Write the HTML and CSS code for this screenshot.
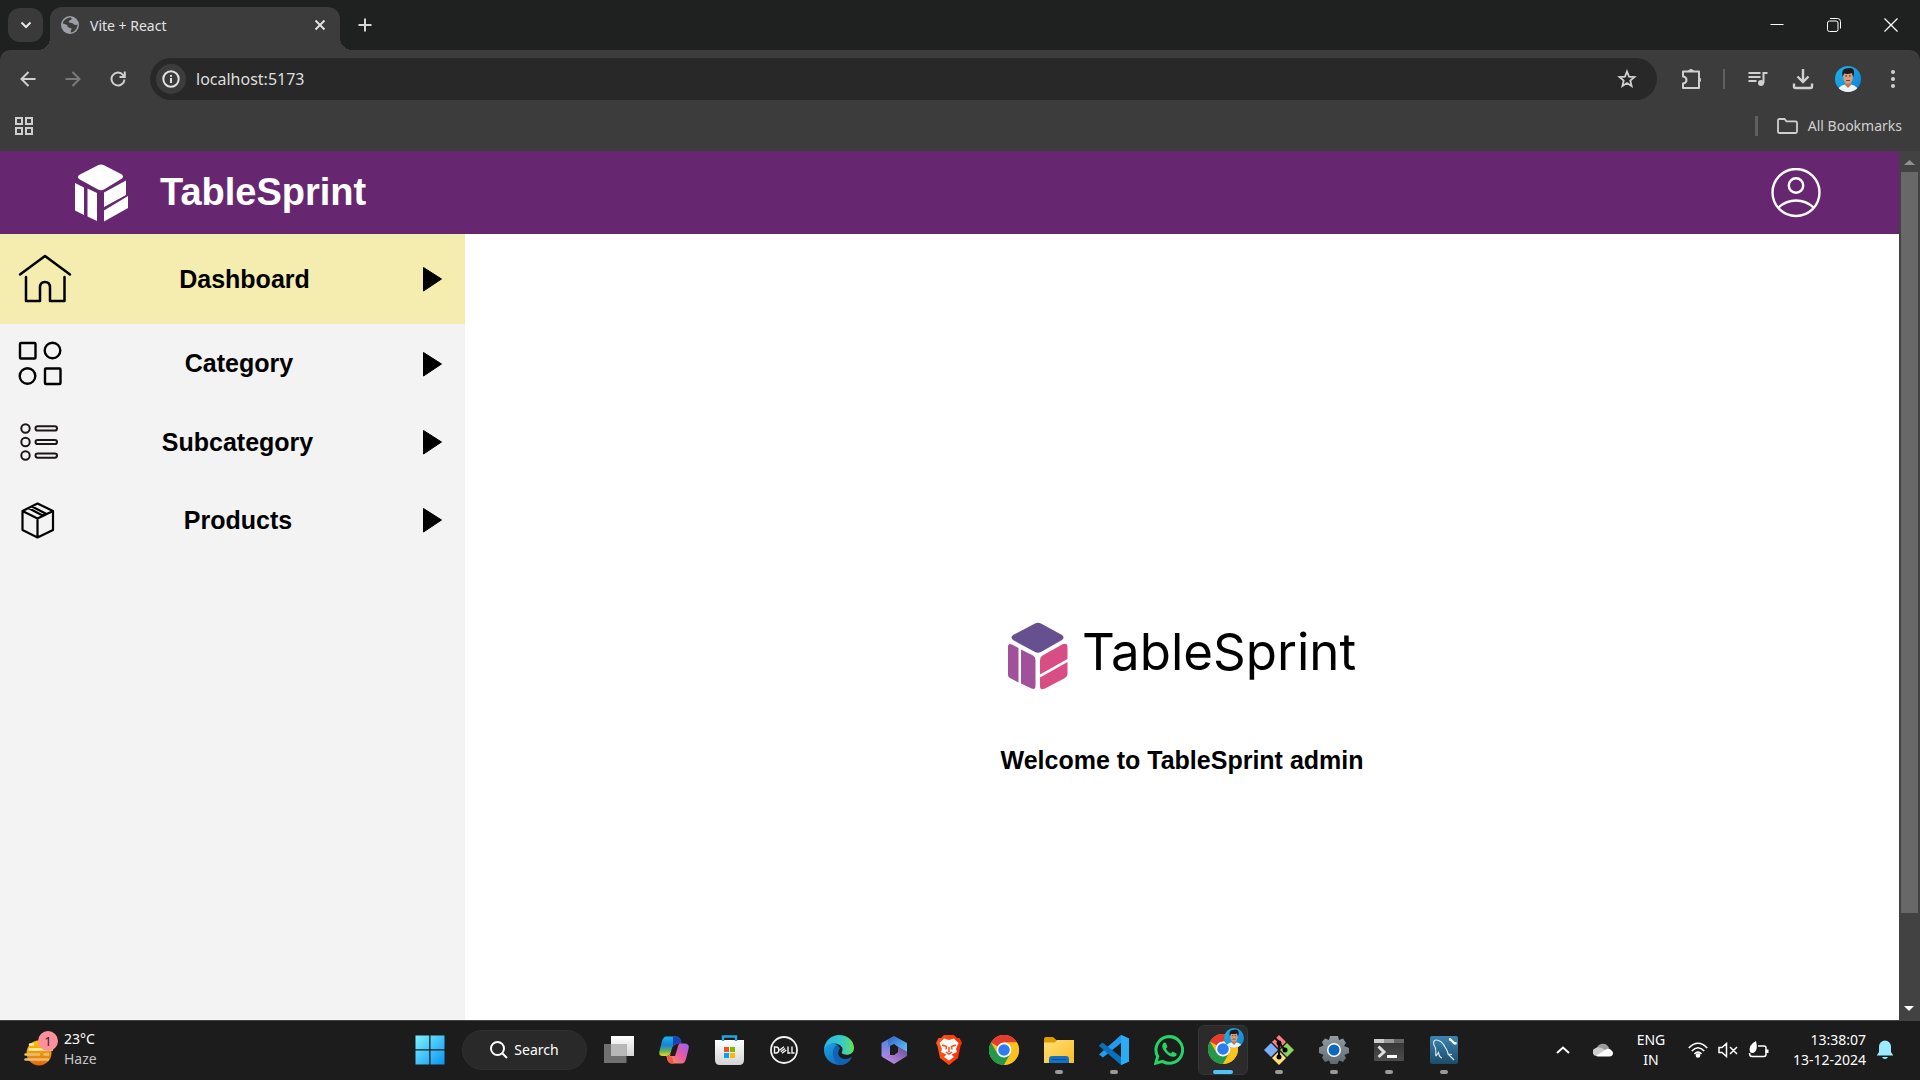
FILE: index.html
```html
<!DOCTYPE html>
<html lang="en">
<head>
<meta charset="utf-8">
<title>Vite + React</title>
<link rel="stylesheet" href="styles.css">
</head>
<body>
<svg class="defs" width="0" height="0" aria-hidden="true">
  <defs>
    <linearGradient id="win" x1="0" y1="0" x2="1" y2="1"><stop offset="0" stop-color="#7df3fc"/><stop offset="1" stop-color="#0a93f5"/></linearGradient>
    <linearGradient id="sun" x1="0" y1="0" x2="0" y2="1"><stop offset="0" stop-color="#fcc800"/><stop offset="1" stop-color="#e8650c"/></linearGradient>
    <linearGradient id="sky" x1="0" y1="0" x2="1" y2="1"><stop offset="0" stop-color="#1cb4e8"/><stop offset="1" stop-color="#1380d8"/></linearGradient>
    <linearGradient id="copA" x1="0" y1="0" x2="0" y2="1"><stop offset="0" stop-color="#18b6ee"/><stop offset=".45" stop-color="#1882d8"/><stop offset=".75" stop-color="#61b558"/><stop offset="1" stop-color="#f6d51c"/></linearGradient>
    <linearGradient id="copB" x1="1" y1="0" x2="0" y2="1"><stop offset="0" stop-color="#9a60f5"/><stop offset=".5" stop-color="#ea5aa0"/><stop offset="1" stop-color="#fda34c"/></linearGradient>
    <linearGradient id="edgeA" x1="0" y1="0" x2="1" y2="0"><stop offset="0" stop-color="#2db4e8"/><stop offset=".6" stop-color="#35cbc4"/><stop offset="1" stop-color="#66e05a"/></linearGradient>
    <linearGradient id="edgeB" x1="0" y1="0" x2="1" y2="1"><stop offset="0" stop-color="#1ca4e8"/><stop offset="1" stop-color="#0c59a8"/></linearGradient>
    <linearGradient id="offA" x1="0" y1="0" x2="0" y2="1"><stop offset="0" stop-color="#4a7fe0"/><stop offset="1" stop-color="#b88bea"/></linearGradient>
    <linearGradient id="offB" x1="0" y1="0" x2="1" y2="1"><stop offset="0" stop-color="#3460c8"/><stop offset="1" stop-color="#5fc8f5"/></linearGradient>
    <linearGradient id="offC" x1="0" y1="1" x2="1" y2="0"><stop offset="0" stop-color="#c99af5"/><stop offset="1" stop-color="#6a4a98"/></linearGradient>
    <linearGradient id="brave" x1="0" y1="0" x2="1" y2="0"><stop offset="0" stop-color="#ff5a1c"/><stop offset="1" stop-color="#ff2b00"/></linearGradient>
    <linearGradient id="folder" x1="0" y1="0" x2="1" y2="1"><stop offset="0" stop-color="#ffe07a"/><stop offset="1" stop-color="#fcbc24"/></linearGradient>
    <linearGradient id="grey" x1="0" y1="0" x2="0" y2="1"><stop offset="0" stop-color="#fff"/><stop offset="1" stop-color="#d4d4d4"/></linearGradient>
    <linearGradient id="gear" x1="0" y1="0" x2="0" y2="1"><stop offset="0" stop-color="#949ba3"/><stop offset="1" stop-color="#606870"/></linearGradient>
    <linearGradient id="term" x1="0" y1="0" x2="0" y2="1"><stop offset="0" stop-color="#333"/><stop offset="1" stop-color="#4c4c4c"/></linearGradient>
    <linearGradient id="sql" x1="0" y1="0" x2="0" y2="1"><stop offset="0" stop-color="#3d84b0"/><stop offset="1" stop-color="#1c4c6c"/></linearGradient>
    <symbol id="chrome" viewBox="0 0 30 30">
      <circle cx="15" cy="15" r="15" fill="#fbbc1c"/>
      <path d="M15 15 2 7.500A15 15 0 0 1 28 7.500H15Z" fill="#e33b2e"/>
      <path d="M2 7.500A15 15 0 0 0 15 30L21.500 18.700 15 15 8.500 18.700Z" fill="#229848"/>
      <path d="M28 7.500H15L21.500 18.700 15 30A15 15 0 0 0 28 7.500Z" fill="#fcc21c"/>
      <circle cx="15" cy="15" r="7.400" fill="#fff"/><circle cx="15" cy="15" r="5.800" fill="#2d7cf0"/>
    </symbol>
    <symbol id="avatar" viewBox="0 0 26 26">
      <clipPath id="round"><circle cx="13" cy="13" r="13"/></clipPath>
      <g clip-path="url(#round)">
        <path d="M0 0H26V26H0Z" fill="url(#sky)"/>
        <path d="M2 26Q3 20 10 18.500H16Q23 20 24 26Z" fill="#f0f2f2"/>
        <path d="M10 15H16V19L13 22 10 19Z" fill="#b97a58"/>
        <ellipse cx="13" cy="11.500" rx="4.800" ry="6.300" fill="#d89d78"/>
        <path d="M7.500 11Q6 3 11 2.500 18 .500 19 5 19.500 8 18.300 11L17 7Q13 8.500 9 7.500Z" fill="#20191a"/>
        <path d="M10.300 10H12M14 10H15.700" stroke="#4a2c22"/>
        <path d="M11 14.500H15" stroke="#6b4032"/>
      </g>
    </symbol>
    <symbol id="play" viewBox="0 0 40 52"><path d="M11.500 14.500 29.500 26 11.500 38Z" fill="#000" stroke="#000" stroke-linejoin="round"/></symbol>
  </defs>
</svg>

<div class="window">
  <header class="tabs">
    <button class="tab-search" aria-label="Search tabs"><svg width="12" height="8" viewBox="0 0 12 8"><path d="M1.500 1.500 6 6 10.500 1.500" fill="none" stroke="#e6e6e6" stroke-width="2"/></svg></button>
    <div class="tab">
      <svg width="18" height="18" viewBox="0 0 18 18"><circle cx="9" cy="9" r="9" fill="#9aa0a6"/><path d="M10 1.500C12 3.500 9 4 8 5 7 6.500 9 6.800 11 7 13 8 13 9 15 9L16.500 8.500C16.500 13 13 16 10 16.400 9 15 11 13.500 10.500 12.500 9 11.500 7.500 12 6.500 10.500 6 9.500 7 9 5 8.500L1.800 7.500C2.500 4 6 1.500 10 1.500Z" fill="#3c3c3c"/><path d="M11 2.500 14.500 4.500 13 6.500 10.500 5.500Z" fill="#9aa0a6"/></svg>
      <span class="tab-title">Vite + React</span>
      <button class="plain" aria-label="Close tab"><svg width="12" height="12" viewBox="0 0 12 12"><path d="M1.500 1.500 10.500 10.500M10.500 1.500 1.500 10.500" stroke="#e0e0e0" stroke-width="2"/></svg></button>
    </div>
    <button class="plain new-tab" aria-label="New tab"><svg width="14" height="14" viewBox="0 0 14 14"><path d="M7 .500V13.500M.500 7H13.500" stroke="#d5d5d5" stroke-width="2"/></svg></button>
    <div class="controls">
      <button class="plain" aria-label="Minimize"><svg width="14" height="14" viewBox="0 0 14 14"><path d="M.500 6.500H13.500" stroke="#fff"/></svg></button>
      <button class="plain" aria-label="Restore"><svg width="14" height="14" viewBox="0 0 14 14" fill="none" stroke="#fff"><rect x=".500" y="3" width="10.500" height="10.500" rx="2"/><path d="M3 .500H10.500Q13.500 .500 13.500 3.500V10.500"/></svg></button>
      <button class="plain" aria-label="Close"><svg width="14" height="14" viewBox="0 0 14 14"><path d="M.500 .500 13.500 13.500M13.500 .500 .500 13.500" stroke="#fff" stroke-width="1.300"/></svg></button>
    </div>
  </header>

  <div class="chrome">
    <div class="toolbar">
      <button class="plain tool" aria-label="Back"><svg width="16" height="16" viewBox="0 0 16 16" fill="none" stroke="#d0d0d0" stroke-width="2"><path d="M15.500 8H2M8.500 1 1.500 8 8.500 15"/></svg></button>
      <button class="plain tool" aria-label="Forward"><svg width="16" height="16" viewBox="0 0 16 16" fill="none" stroke="#7a7a7a" stroke-width="2"><path d="M.500 8H14M7.500 1 14.500 8 7.500 15"/></svg></button>
      <button class="plain tool" aria-label="Reload"><svg width="16" height="16" viewBox="0 0 16 16" fill="none" stroke="#d0d0d0" stroke-width="2"><path d="M14.500 8.500A6.500 6.500 0 1 1 13 3.800L14.500 5.500M14.800 .500V6H9.500"/></svg></button>
      <div class="omnibox">
        <button class="site-info" aria-label="View site information"><svg width="18" height="18" viewBox="0 0 18 18" fill="none" stroke="#e2e2e2" stroke-width="2"><circle cx="9" cy="9" r="7.700"/><path d="M9 8V13M9 5V6.800"/></svg></button>
        <input class="url" type="text" aria-label="Address" value="localhost:5173">
        <button class="plain" aria-label="Bookmark this tab"><svg width="20" height="20" viewBox="0 0 20 20" fill="none" stroke="#d0d0d0" stroke-width="1.800"><path d="M10 2.500 12 7.600 17.500 8 13.300 11.500 14.600 17 10 14 5.400 17 6.700 11.500 2.500 8 8 7.600Z"/></svg></button>
      </div>
      <button class="plain tool" aria-label="Extensions"><svg width="22" height="22" viewBox="0 0 22 22" fill="none" stroke="#d0d0d0" stroke-width="2"><path d="M2 3.500H18V20H2V15.500Q5.500 15 5.500 12T2 8.500Z" stroke-linejoin="round"/><path d="M7.500 3A2.800 2.800 0 0 1 12.500 3ZM18.500 9.500A2.800 2.800 0 0 1 18.500 14Z" fill="#d0d0d0" stroke-width="1"/></svg></button>
      <span class="divider"></span>
      <button class="plain tool" aria-label="Media"><svg width="20" height="18" viewBox="0 0 20 18" fill="none" stroke="#d0d0d0" stroke-width="2"><path d="M.500 3H12.500M.500 7H12.500M.500 11H8.500M15.500 13V3H19.500"/><circle cx="13" cy="13" r="3" fill="#d0d0d0" stroke="none"/></svg></button>
      <button class="plain tool" aria-label="Downloads"><svg width="22" height="22" viewBox="0 0 22 22" fill="none" stroke="#d0d0d0" stroke-width="2.400"><path d="M11 1V13M5.500 8.500 11 14 16.500 8.500M2 15.500V18.500Q2 20 3.500 20H18.500Q20 20 20 18.500V15.500"/></svg></button>
      <button class="plain tool" aria-label="Profile"><svg width="26" height="26"><use href="#avatar"/></svg></button>
      <button class="plain tool" aria-label="Menu"><svg width="4" height="18" viewBox="0 0 4 18" fill="#d0d0d0"><circle cx="2" cy="2" r="2"/><circle cx="2" cy="9" r="2"/><circle cx="2" cy="16" r="2"/></svg></button>
    </div>
    <div class="bookmarks">
      <button class="plain" aria-label="Apps"><svg width="18" height="18" viewBox="0 0 18 18" fill="none" stroke="#cfcfcf" stroke-width="2"><path d="M1 1H7V7H1ZM11 1H17V7H11ZM1 11H7V17H1ZM11 11H17V17H11Z"/></svg></button>
      <span class="divider thick"></span>
      <button class="plain all"><svg width="21" height="16" viewBox="0 0 21 16" fill="none" stroke="#d0d0d0" stroke-width="1.800"><path d="M1 2.500Q1 1 2.500 1H7.500L9.500 3.300H18.500Q20 3.300 20 4.800V13.500Q20 15 18.500 15H2.500Q1 15 1 13.500Z"/></svg>All Bookmarks</button>
    </div>
  </div>

  <div class="viewport">
    <div class="page">
      <div class="brandbar">
        <svg width="54" height="58" viewBox="0 0 54 58" fill="#fff"><path d="M24.500 1Q27 0 29.500 1L48 10.500Q50 12.500 48 14.500L30 25.500Q27 27 24 25.500L5 15Q3 13 5 11ZM1 19 10 23.500V51L1 46.500ZM13.500 24.500 23 29V57L13.500 52.500ZM30 28.500 52 16.500V31L30 43ZM30 46.500 54 32V44L30 57.500Z"/></svg>
        <h1>TableSprint</h1>
        <button class="plain account" aria-label="Account"><svg width="50" height="50" viewBox="0 0 50 50" fill="none" stroke="#fff" stroke-width="2.400"><circle cx="25" cy="24.500" r="23.500"/><circle cx="25" cy="17.500" r="7.200"/><path d="M7.500 39.500Q15 32.500 25 32.500T42.500 39.500"/></svg></button>
      </div>
      <div class="body">
        <nav class="sidebar">
          <a class="item active" href="#dashboard"><svg width="64" height="64" viewBox="0 0 64 64" fill="none" stroke="#000" stroke-width="2.500" stroke-linejoin="round" stroke-linecap="round"><path d="M7 27.500 32 9 57 27.500M13 30V54H27V40.500Q27 35 32 35T37 40.500V54H51.500V30"/></svg><span>Dashboard</span><svg width="40" height="52"><use href="#play"/></svg></a>
          <a class="item" href="#category"><svg width="53" height="53" viewBox="0 0 53 53" fill="none" stroke="#000" stroke-width="2.400"><rect x="7" y="6" width="15.500" height="15.500" rx="1"/><circle cx="39.500" cy="13.500" r="7.800"/><circle cx="14.500" cy="39" r="7.800"/><rect x="32" y="31.500" width="15.500" height="15.500" rx="1"/></svg><span>Category</span><svg width="40" height="52"><use href="#play"/></svg></a>
          <a class="item" href="#subcategory"><svg width="50" height="50" viewBox="0 0 50 50" fill="none" stroke="#1c1719" stroke-width="2"><circle cx="12.500" cy="11.500" r="4.200"/><circle cx="12.500" cy="25" r="4.200"/><circle cx="12.500" cy="38.500" r="4.200"/><rect x="22.500" y="9.300" width="21.500" height="4.200" rx="2.100"/><rect x="22.500" y="22.900" width="21.500" height="4.200" rx="2.100"/><rect x="22.500" y="36.500" width="21.500" height="4.200" rx="2.100"/></svg><span>Subcategory</span><svg width="40" height="52"><use href="#play"/></svg></a>
          <a class="item" href="#products"><svg width="51" height="50" viewBox="0 0 51 50" fill="none" stroke="#000" stroke-width="2.200" stroke-linejoin="round"><path d="M24.500 8.500 40 16V35L24.500 42.500 9.500 35V16ZM9.500 16 24.500 23.500 40 16M24.500 23.500V42.500M15.500 13 29.500 20.500 33 18.800 19 11.500"/></svg><span>Products</span><svg width="40" height="52"><use href="#play"/></svg></a>
        </nav>
        <main class="content">
          <div class="logo">
            <svg width="60" height="68" viewBox="0 0 60 68"><path d="M27 1.500Q30 0 33 1.500L54 13Q57 15.500 54 18L33 30Q30 31.500 27 30L5 18Q2 15.500 5 13Z" fill="#66508f"/><path d="M0 25Q0 20.500 4 22.500L10.500 26V60.500L2 56Q0 55 0 53ZM13 27.500 25 33.500Q27.500 35 27.500 38V64Q27.500 68 23.500 66.500L13 61.500Z" fill="#a1509a"/><path d="M32 38Q32 35 34.500 33.500L55 22Q59.500 20.500 59.500 25V37L32 52.500ZM32 55.500 59.500 40V52Q59.500 54.500 57 56L37 66.500Q32 69 32 64Z" fill="#d84e84"/></svg>
            <span>TableSprint</span>
          </div>
          <h2>Welcome to TableSprint admin</h2>
        </main>
      </div>
    </div>
    <div class="scrollbar" aria-hidden="true">
      <svg width="21" height="21" viewBox="0 0 21 21"><path d="M5 14 10.500 9 16 14Z" fill="#929292"/></svg>
      <div class="thumb"></div><div class="track"></div>
      <svg width="21" height="21" viewBox="0 0 21 21"><path d="M5 7 10 12 15 7Z" fill="#fff"/></svg>
    </div>
  </div>

  <footer class="taskbar">
    <button class="plain weather">
      <svg width="36" height="36" viewBox="0 0 36 36"><circle cx="16" cy="22" r="12.500" fill="url(#sun)"/><path d="M7 13.500H10M6.500 18.500H29" stroke="#fff1b8" stroke-width="2.500" stroke-linecap="round"/><path d="M2.500 23.500H16M21.500 23.500H25M2.500 28.500H25" stroke="#e3c17c" stroke-width="2.500" stroke-linecap="round"/><circle cx="25" cy="10" r="10" fill="#ff8f9b"/><text x="25" y="15" text-anchor="middle" class="badge">1</text></svg>
      <span>23°C<br><span class="dim">Haze</span></span>
    </button>
    <div class="apps">
      <button class="plain app" aria-label="Start"><svg width="30" height="30" viewBox="0 0 30 30"><path d="M.500 .500H14.200V14.200H.500ZM15.500 .500H29.500V14.200H15.500ZM.500 15.500H14.200V29.500H.500ZM15.500 15.500H29.500V29.500H15.500Z" fill="url(#win)"/></svg></button>
      <button class="search"><svg width="18" height="18" viewBox="0 0 18 18" fill="none" stroke="#fff" stroke-width="2"><circle cx="7.500" cy="7.500" r="6.500"/><path d="M12 12 17 17"/></svg>Search</button>
      <button class="plain app" aria-label="Task view"><svg width="30" height="30" viewBox="0 0 30 30"><path d="M7 1H30V21H7Z" fill="url(#grey)"/><path d="M0 9H22.500V28H0Z" fill="#707070"/><path d="M7 9H22.500V21H7Z" fill="#b8b8b8"/></svg></button>
      <button class="plain app" aria-label="Copilot"><svg width="32" height="30" viewBox="0 0 32 30"><path d="M8 1.500H18Q21.500 1.500 22.500 5L23.500 8.500H19Q15.500 8.500 14.500 12L12.500 18Q11.500 21 8 21H5Q0 21 1.500 16L4 6Q5.500 1.500 8 1.500Z" fill="url(#copA)"/><path d="M15 1.500H18Q21.500 1.500 22.500 5L23.500 8.500H19Q16 8.500 15 11Z" fill="#1c42b8"/><path d="M24 28.500H14Q10.500 28.500 9.500 25L8.500 21Q11.500 21 13 18L15.500 11Q16.500 8.500 20 8.500H27Q32 9 30.500 14L28 24Q26.500 28.500 24 28.500Z" fill="url(#copB)"/><path d="M8.500 21H11Q14 21 15 25L16 28.500H14Q10.500 28.500 9.500 25Z" fill="#ee5a45"/><path d="M14 14 12 21H17L19.500 13Q20 9 22 8.500 16 8 14 14Z" fill="#1c1c1c"/></svg></button>
      <button class="plain app" aria-label="Microsoft Store"><svg width="30" height="30" viewBox="0 0 30 30"><path d="M1 5H30V25Q30 30 25 30H6Q1 30 1 25Z" fill="url(#grey)"/><path d="M9 6V1.500H22V6" fill="none" stroke="#22a5dc" stroke-width="2.400"/><path d="M10 12H15V17H10Z" fill="#f25022"/><path d="M16 12H21V17H16Z" fill="#7fba00"/><path d="M10 18H15V23H10Z" fill="#00a4ef"/><path d="M16 18H21V23H16Z" fill="#ffb900"/></svg></button>
      <button class="plain app" aria-label="Dell"><svg width="28" height="28" viewBox="0 0 28 28" fill="none" stroke="#f2f2f2" stroke-width="1.800"><circle cx="14" cy="14" r="13"/><path d="M4.500 11V17H6Q8.800 17 8.800 14T6 11ZM9.500 14.200 14 10.800M10.800 15.800 15 12.500M12 17.300 16.300 14M18 10.500V17H20.500M22 10.500V17H24.500" stroke-width="1.400"/></svg></button>
      <button class="plain app" aria-label="Edge"><svg width="30" height="30" viewBox="0 0 30 30"><path d="M0 15C0 9 8 7 13 10 18 13 10 17 14 22 17 26 23 26 28 22 24 30 17 31 12 29.500 5 28 0 22 0 15Z" fill="url(#edgeB)"/><path d="M13 10Q8 13 9 20 10 27 16 30 24 29.500 28 22 22 25.500 17 23 12 19 16 13Z" fill="#0f62b5"/><path d="M0 14C1 5 8 0 15 0 24 0 30 6 30 13 30 19 24 21 19 19 16 17.500 20 16 18 12.500 15 7 4 7 0 14Z" fill="url(#edgeA)"/></svg></button>
      <button class="plain app" aria-label="Microsoft 365"><svg width="28" height="30" viewBox="0 0 28 30"><path d="M14 1 1.500 8V21L10 26V10Z" fill="url(#offA)"/><path d="M14 1 27 8V17L18 12 14 9 8 12V5Z" fill="url(#offB)"/><path d="M27 17V21L14 29 1.500 21.500 8 20 14 20 18 17V12Z" fill="url(#offC)"/><path d="M14 9.500 18 12V17L14 20 10 17V12Z" fill="#1c1c1c"/></svg></button>
      <button class="plain app" aria-label="Brave"><svg width="26" height="30" viewBox="0 0 26 30"><path d="M8 0H18L21 3 23.500 3 26 8 24.500 11 22 23 13 30 4 23 1.500 11 0 8 2.500 3 5 3Z" fill="url(#brave)"/><path d="M8 3.500 13 5 18 3.500 22.500 8 20 14 21 17 15.500 19.500 18 22 13 25.500 8 22 10.500 19.500 5 17 6 14 3.500 8Z" fill="#fff"/><path d="M6 10 10.500 11.500 10 14.500M20 10 15.500 11.500 16 14.500M13 12V17M10 17 13 19 16 17" fill="none" stroke="#fb4b18" stroke-width="1.500"/></svg></button>
      <button class="plain app" aria-label="Chrome"><svg width="30" height="30"><use href="#chrome"/></svg></button>
      <button class="plain app running" aria-label="File Explorer"><svg width="30" height="30" viewBox="0 0 30 30"><path d="M0 4Q0 2 2 2H9L13 5.500V9H0Z" fill="#dc9c00"/><path d="M0 7.500H11L13 5H30V28H0Z" fill="url(#folder)"/><path d="M5 28V24Q5 21 8 21H22Q25 21 25 24V28Z" fill="#1073c8"/><path d="M8 24.500H22" stroke="#0b4c88"/></svg></button>
      <button class="plain app running" aria-label="Visual Studio Code"><svg width="30" height="30" viewBox="0 0 30 30"><path d="M22 0 30 3.500V26.500L22 30V8L4 22.500 0 19.500Z" fill="#1f9cec"/><path d="M0 10.500 3.500 7.500 22 22V30L0 11Z" fill="#0a70bc"/><path d="M22 0 30 3.500V26.500L22 30Z" fill="#2cabf5"/></svg></button>
      <button class="plain app" aria-label="WhatsApp"><svg width="30" height="30" viewBox="0 0 30 30"><path d="M1.800 28.200 3.700 21.500A13.300 13.300 0 1 1 8.500 26.400Z" fill="none" stroke="#26d366" stroke-width="3"/><path d="M10 7.500C7 10 8 14 12 18S20 23 22.500 20.500V18.500L18.500 16.500 17 18.500Q13.500 17.500 12 13.500L13.500 12 12 8Z" fill="#26d366"/></svg></button>
      <button class="plain app current" aria-label="Chrome, TableSprint"><svg width="38" height="38" viewBox="0 0 38 38"><use href="#chrome" x="2" y="6" width="30" height="30"/><use href="#avatar" x="18" y="0" width="20" height="20"/></svg></button>
      <button class="plain app running" aria-label="Git Bash"><svg width="30" height="30" viewBox="0 0 30 30"><path d="M15 0 22 7 15 14 8 7Z" fill="#ff7f80"/><path d="M23 8 30 15 23 22 16 15Z" fill="#8bd35c"/><path d="M7 8 14 15 7 22 0 15Z" fill="#7caef8"/><path d="M15 16 22 23 15 30 8 23Z" fill="#ffe072"/><path d="M10 2 15 7V23M15 8 21 15" stroke="#171717" stroke-width="2.200" fill="none"/><circle cx="15" cy="8" r="2.500"/><circle cx="15" cy="22" r="2.500"/><circle cx="21" cy="15" r="2.500"/></svg></button>
      <button class="plain app running" aria-label="Settings"><svg width="30" height="30" viewBox="0 0 30 30"><path d="M11 1H19L20 5 24 3.500 27 8 25 11 30 13V18L25.500 20 27 23 24 27 20 25.500 18.500 29H11.500L10 25.500 6 27 3 22.500 4.500 20 0 18V12.500L4.500 10.500 3 7 6 3.500 10 5Z" fill="url(#gear)"/><circle cx="15" cy="15" r="7" fill="#fff"/><circle cx="15" cy="15" r="5.500" fill="#0b68ba"/></svg></button>
      <button class="plain app running" aria-label="Terminal"><svg width="30" height="22" viewBox="0 0 30 22"><rect width="30" height="22" rx="1" fill="url(#term)"/><path d="M0 0H10V4H0Z" fill="#ccc"/><path d="M10 0H20V4H10Z" fill="#999"/><path d="M20 0H30V4H20Z" fill="#666"/><path d="M4.500 7.500 10 13 4.500 18" fill="none" stroke="#ddd" stroke-width="3"/><path d="M13 17.500H23" stroke="#fff" stroke-width="3"/></svg></button>
      <button class="plain app running" aria-label="MySQL Workbench"><svg width="28" height="28" viewBox="0 0 28 28"><rect width="28" height="28" rx="2" fill="url(#sql)"/><path d="M6 20C5 17 7 15 5 11 3 8 3 4 6 4 10 4 13 7 15 11 17 14 18 16 18 18L24 24M18 18 22 18.500M6 20 8.500 16.500Q9 21 12 22" fill="none" stroke="#dbe8ef" stroke-width="1.200"/><path d="M20 3 25 8M20 2V4.500M25.500 6V8.500" fill="none" stroke="#fff" stroke-width="2.200"/></svg></button>
    </div>
    <div class="tray">
      <button class="plain" aria-label="Show hidden icons"><svg width="14" height="8" viewBox="0 0 14 8"><path d="M1 7 7 1.500 13 7" fill="none" stroke="#fff" stroke-width="2"/></svg></button>
      <button class="plain" aria-label="OneDrive"><svg width="20" height="14" viewBox="0 0 20 14"><path d="M4 12A4 4 0 0 1 4 4.500 6.500 6.500 0 0 1 16 5L8 12Z" fill="#9a9a9a"/><path d="M4 13A4 4 0 0 1 1 6Q6 2 12 7L8 13Z" fill="#cdcdcd"/><path d="M3 13 12 7Q16 4 18 7 21 9 19.500 12 18.500 13.500 16 13.500H5Z" fill="#fff"/></svg></button>
      <button class="plain lang">ENG<br>IN</button>
      <button class="plain status" aria-label="Network, volume and battery">
        <svg width="20" height="16" viewBox="0 0 20 16" fill="none" stroke="#fff" stroke-width="1.700"><path d="M.800 6Q10-3.500 19.200 6M3.800 9Q10 2.500 16.200 9M6.500 12Q10 8.500 13.500 12"/><circle cx="10" cy="13.500" r="1.500" fill="#fff"/></svg>
        <svg width="20" height="16" viewBox="0 0 20 16" fill="none" stroke="#fff" stroke-width="1.500"><path d="M1 5.500H4L8.500 1.500V14.500L4 10.500H1ZM12 5 19 12M19 5 12 12"/></svg>
        <svg width="21" height="18" viewBox="0 0 21 18" fill="none" stroke="#fff" stroke-width="1.500"><path d="M10 5H16Q18 5 18 7V13Q18 15.500 16 15.500H4Q1.500 15.500 1.500 12"/><path d="M19 8.500V12" stroke-width="3"/><path d="M8 0Q10 8 7 11 4 13 2 11 0 4 8 0ZM2 14 5 8" fill="#fff" stroke="none"/></svg>
      </button>
      <button class="plain clock">13:38:07<br>13-12-2024</button>
      <button class="plain bell" aria-label="Notifications"><svg width="16" height="19" viewBox="0 0 16 19" fill="#9aebff"><path d="M2 12V6.500A6 6 0 0 1 14 6.500V12L16 15V15.500H0V15ZM5 17H11Q10 19 8 19T5 17Z"/></svg></button>
    </div>
  </footer>
</div>
</body>
</html>
```
FILE: styles.css
```css
* { box-sizing: border-box; }

body {
  margin: 0;
  background: #1f2121;
  color: #000;
  font-family: "Liberation Sans", Arial, sans-serif;
}

svg { display: block; flex: none; }
.defs { position: absolute; }

button { font: inherit; color: inherit; }

.plain {
  display: flex;
  align-items: center;
  justify-content: center;
  padding: 0;
  border: 0;
  background: none;
}

.window {
  display: flex;
  flex-direction: column;
  height: 100vh;
}

/* Browser frame */
.tabs, .chrome, .taskbar { font-family: "Noto Sans", "Open Sans", sans-serif; }

.tabs {
  display: flex;
  height: 50px;
  padding-left: 8px;
  background: #1f2121;
}

.tab-search {
  display: grid;
  place-items: center;
  width: 35px;
  height: 34px;
  margin: 8px 7px 0 0;
  padding: 0;
  border: 0;
  border-radius: 12px;
  background: #3a3a3a;
}

.tab {
  position: relative;
  display: flex;
  align-items: center;
  gap: 11px;
  width: 290px;
  margin-top: 7px;
  padding: 0 14px 7px 11px;
  border-radius: 12px 12px 0 0;
  background: #3c3c3c;
  color: #e3e3e3;
  font-size: 14px;
}

.tab::before, .tab::after {
  content: "";
  position: absolute;
  bottom: 0;
  width: 12px;
  height: 12px;
}
.tab::before { right: 100%; background: radial-gradient(circle at 0 0, transparent 12px, #3c3c3c 12px); }
.tab::after { left: 100%; background: radial-gradient(circle at 100% 0, transparent 12px, #3c3c3c 12px); }

.tab-title { flex: 1; }
.new-tab { width: 50px; }

.controls { display: flex; margin-left: auto; padding-right: 1px; }
.controls .plain { width: 57px; }

.chrome {
  border-radius: 10px 10px 0 0;
  background: #3c3c3c;
  color: #d0d0d0;
}

.toolbar {
  display: flex;
  align-items: center;
  height: 58px;
  padding: 0 5px;
}

.tool { width: 45px; height: 42px; }

.omnibox {
  display: flex;
  flex: 1;
  align-items: center;
  gap: 10px;
  height: 42px;
  margin: 0 12px 0 10px;
  padding: 0 20px 0 6px;
  border-radius: 21px;
  background: #282828;
}

.site-info {
  display: grid;
  place-items: center;
  width: 30px;
  height: 30px;
  padding: 0;
  border: 0;
  border-radius: 50%;
  background: #3c3c3c;
}

.url {
  flex: 1;
  padding: 0;
  border: 0;
  outline: 0;
  background: none;
  color: #dedede;
  font: inherit;
  font-size: 16px;
}

.divider {
  width: 2px;
  height: 20px;
  margin: 0 10px 0 9px;
  background: #5f5f5f;
}
.divider.thick { width: 3px; margin: 0 19px 0 auto; }

.bookmarks {
  display: flex;
  align-items: center;
  height: 43px;
  padding: 0 18px 8px 15px;
  font-size: 14px;
}
.all { gap: 10px; }

/* Page */
.viewport {
  display: flex;
  flex: 1;
  min-height: 0;
}

.page {
  display: flex;
  flex: 1;
  flex-direction: column;
  overflow: hidden;
  background: #fff;
}

.brandbar {
  display: flex;
  align-items: center;
  gap: 32px;
  height: 83px;
  padding: 0 78px 0 74px;
  background: #672770;
  color: #fff;
}
.brandbar h1 { margin: 0; font-size: 38px; }
.account { margin-left: auto; }

.body { display: flex; flex: 1; }

.sidebar { width: 465px; background: #f3f3f3; }

.item {
  display: flex;
  align-items: center;
  justify-content: space-between;
  padding: 13px;
  color: #000;
  font-size: 25px;
  font-weight: bold;
  text-decoration: none;
}
.item.active { background: #f5edb0; }

.content {
  display: flex;
  flex: 1;
  flex-direction: column;
  align-items: center;
  justify-content: center;
  gap: 56px;
  padding-top: 142px;
}
.content h2 { margin: 0; font-size: 25px; }

.logo {
  display: flex;
  align-items: flex-start;
  gap: 14px;
  font-family: Inter, sans-serif;
  font-size: 51px;
  line-height: 60px;
}

.scrollbar {
  display: flex;
  flex-direction: column;
  width: 21px;
  background: #424242;
}
.thumb { flex: 741; margin: 0 2px; background: #686868; }
.track { flex: 86; }

/* Taskbar */
.taskbar {
  display: flex;
  height: 60px;
  border-top: 1px solid #444;
  background: #1c1c1c;
  color: #fff;
  font-size: 14px;
  line-height: 20px;
}

.weather {
  gap: 5px;
  width: 402px;
  padding: 0 0 4px 23px;
  justify-content: flex-start;
  text-align: left;
}
.dim { color: #c4c4c4; }
.badge { font-size: 13px; fill: #301c20; }

.apps { display: flex; align-items: center; padding-bottom: 1px; }

.app {
  position: relative;
  width: 55px;
  height: 50px;
}

.running::after, .current::after {
  content: "";
  position: absolute;
  bottom: 1px;
  left: 50%;
  width: 8px;
  height: 4px;
  margin-left: -4px;
  border-radius: 2px;
  background: #9a9a9a;
}
.current {
  width: 50px;
  margin: 0 3px 0 2px;
  padding: 0 0 6px 4px;
  border: 1px solid #363636;
  border-radius: 6px;
  background: #2b2b2b;
}
.current::after { bottom: 0; width: 20px; margin-left: -10px; background: #4cc2ff; }

.search {
  display: flex;
  align-items: center;
  justify-content: center;
  gap: 6px;
  width: 125px;
  height: 40px;
  margin: 0 4px 0 5px;
  padding: 0;
  border: 1px solid #303030;
  border-radius: 20px;
  background: #292929;
}

.tray {
  display: flex;
  margin-left: auto;
  padding: 0 16px 2px 0;
}
.tray .plain { width: 40px; }
.tray .lang { width: 56px; }
.tray .status { gap: 10px; width: 98px; }
.tray .clock { width: 89px; justify-content: flex-end; text-align: right; }
.tray .bell { width: 38px; }
```
